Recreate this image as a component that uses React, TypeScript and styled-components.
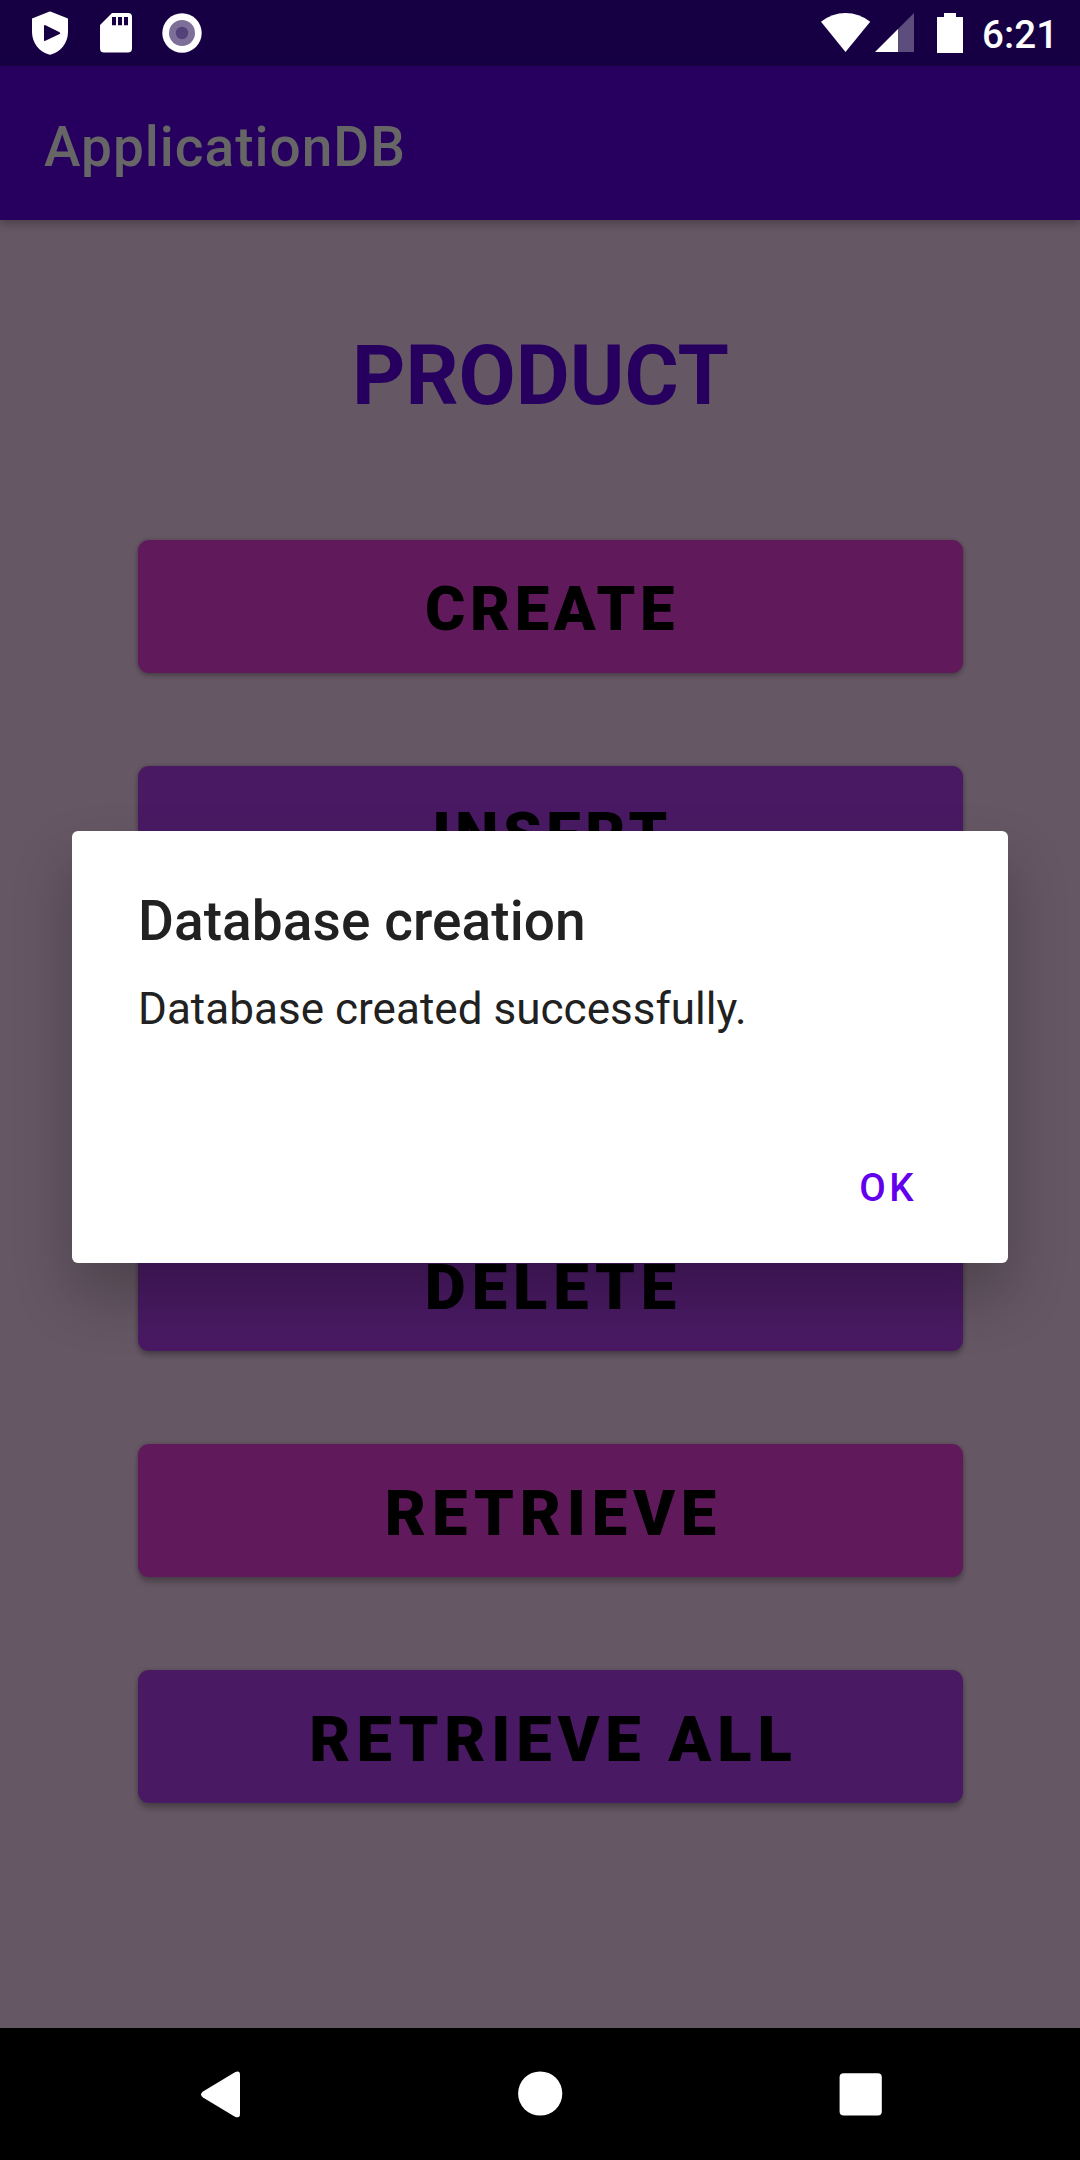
import React from 'react';
import styled, { createGlobalStyle } from 'styled-components';

const Global = createGlobalStyle`
  * { box-sizing: border-box; }
  html, body { margin: 0; background: #655764; }
  body { font-family: Roboto, sans-serif; }
`;
const Screen = styled.div`
  position: relative; width: 1080px; height: 2160px; overflow: hidden;
  display: flex; flex-direction: column; background: #655764;
`;
const StatusBar = styled.header`
  height: 66px; flex: none; display: flex; align-items: center;
  justify-content: space-between; background: #160043;
`;
const StatusGroup = styled.div`
  display: flex; align-items: center; height: 66px;
  svg { display: block; }
`;
const Clock = styled.span`
  width: 98px; padding-top: 3px; color: #fff; white-space: nowrap;
  font-size: 38.5px; font-weight: 500; line-height: 63px; letter-spacing: 0.1px;
`;
const AppBar = styled.div`
  height: 154px; flex: none; display: flex; align-items: center; padding: 7px 44px 0 44px;
  background: #27005f; box-shadow: 0 4px 8px rgba(0, 0, 0, 0.25); color: #666;
  font-size: 55px; font-weight: 500; letter-spacing: 1px;
`;
const Main = styled.main`
  flex: 1; display: flex; flex-direction: column; align-items: center;
`;
const Heading = styled.h1`
  margin: 108px 0 0; padding-left: 1px; height: 96px; line-height: 96px;
  font-size: 83px; font-weight: 700; color: #27005f;
`;
const Actions = styled.div`
  margin: 116px 0 0 21px; width: 825px; display: flex; flex-direction: column; gap: 93px;
`;
const Action = styled.button<{ $pink?: boolean; $large?: boolean; $drop: number }>`
  height: 133px; border: 0; border-radius: 11px;
  padding: 5px 0 0 ${p => (p.$large ? 6 : 3)}px;
  background: ${p => (p.$pink ? '#601a5b' : '#491a63')}; color: #000;
  font: 900 ${p => (p.$large ? 63.25 : 61.5)}px Roboto, sans-serif;
  letter-spacing: ${p => (p.$large ? 5.9 : 4.6)}px;
  box-shadow: 0 ${p => p.$drop}px 5px rgba(0, 0, 0, 0.2), 0 0 4px rgba(0, 0, 0, 0.2);
`;
const Dialog = styled.section`
  position: absolute; left: 72px; top: 831px; width: 936px; height: 432px;
  padding: 55px 66px 0; display: flex; flex-direction: column;
  border-radius: 6px; background: #fff; box-shadow: 0 32px 60px rgba(0, 0, 0, 0.24);
`;
const DialogTitle = styled.h2`
  margin: 0; font-size: 55px; font-weight: 500; line-height: 70px; letter-spacing: 0.08px; color: #212121;
`;
const Message = styled.p`
  margin: 27px 0 0; font-size: 44px; line-height: 52px; letter-spacing: 0.03px; color: #212121;
`;
const Confirm = styled.button`
  align-self: flex-end; margin: 123px 25px 0 0; padding: 0; border: 0; background: none; color: #6200ee;
  font: 500 38.5px/60px Roboto, sans-serif; letter-spacing: 3.5px;
`;
const NavBar = styled.nav`
  height: 132px; flex: none; display: flex; align-items: center; justify-content: space-between;
  padding: 0 195px 0 198px; background: #000;
  svg { display: block; }
`;

const NotificationIcons = () => (
  <svg width="220" height="66" viewBox="0 0 220 66" fill="#fff">
    <path
      fillRule="evenodd"
      d="M49 11.7q1-.5 2 0L68 18.6V32C68 43 60.5 52 51 54.5q-1 .3-2 0C39.5 52 32 43 32 32V18.6ZM45.5 25.2Q44 24.7 44 26V40.2Q44 41.4 45.4 40.8L59.6 34Q61 33.2 59.6 32.2Z"
    />
    <path
      fillRule="evenodd"
      d="M112 13H128Q132 13 132 17V48.5Q132 52.5 128 52.5H104Q100 52.5 100 48.5V25ZM112 17V25.3H116V17ZM118 17V25.3H122V17ZM124 17V25.3H128V17Z"
    />
    <circle cx="182" cy="33" r="19.7" />
    <circle cx="182" cy="33" r="13" fill="#7d6f98" />
    <circle cx="182" cy="33" r="6.2" fill="#54417a" />
  </svg>
);

const SystemIcons = () => (
  <svg width="162" height="66" viewBox="820 0 162 66" fill="#fff">
    <path d="M821 21.7Q832 13 845.5 13T870.2 21.7L845.5 52Z" />
    <path d="M914 13V52H898V29Z" fill="#5c4d7d" />
    <path d="M875 52 898 29V52Z" />
    <path d="M944 13H956V17H963V53H937V17H944Z" />
  </svg>
);

export default function App() {
  return (
    <Screen>
      <Global />
      <StatusBar>
        <StatusGroup>
          <NotificationIcons />
        </StatusGroup>
        <StatusGroup>
          <SystemIcons />
          <Clock>6:21</Clock>
        </StatusGroup>
      </StatusBar>
      <AppBar>ApplicationDB</AppBar>
      <Main>
        <Heading>PRODUCT</Heading>
        <Actions>
          <Action $pink $drop={3}>CREATE</Action>
          <Action $drop={4}>INSERT</Action>
          <Action $pink $drop={4} />
          <Action $large $drop={5}>DELETE</Action>
          <Action $pink $large $drop={6}>RETRIEVE</Action>
          <Action $large $drop={6}>RETRIEVE ALL</Action>
        </Actions>
      </Main>
      <Dialog role="dialog">
        <DialogTitle>Database creation</DialogTitle>
        <Message>Database created successfully.</Message>
        <Confirm>OK</Confirm>
      </Dialog>
      <NavBar>
        <svg width="48" height="48" viewBox="0 0 48 48" fill="#fff">
          <path d="M36.5 2.6Q42 -.2 42 5V44Q42 49 36.5 46.4L5 27.5Q1 24.5 5 21.5Z" />
        </svg>
        <svg width="48" height="48" viewBox="0 0 48 48" fill="#fff">
          <circle cx="22.2" cy="23.5" r="22.1" />
        </svg>
        <svg width="48" height="48" viewBox="0 0 48 48" fill="#fff">
          <rect x="2.6" y="3.2" width="42.2" height="42.4" rx="4" />
        </svg>
      </NavBar>
    </Screen>
  );
}
